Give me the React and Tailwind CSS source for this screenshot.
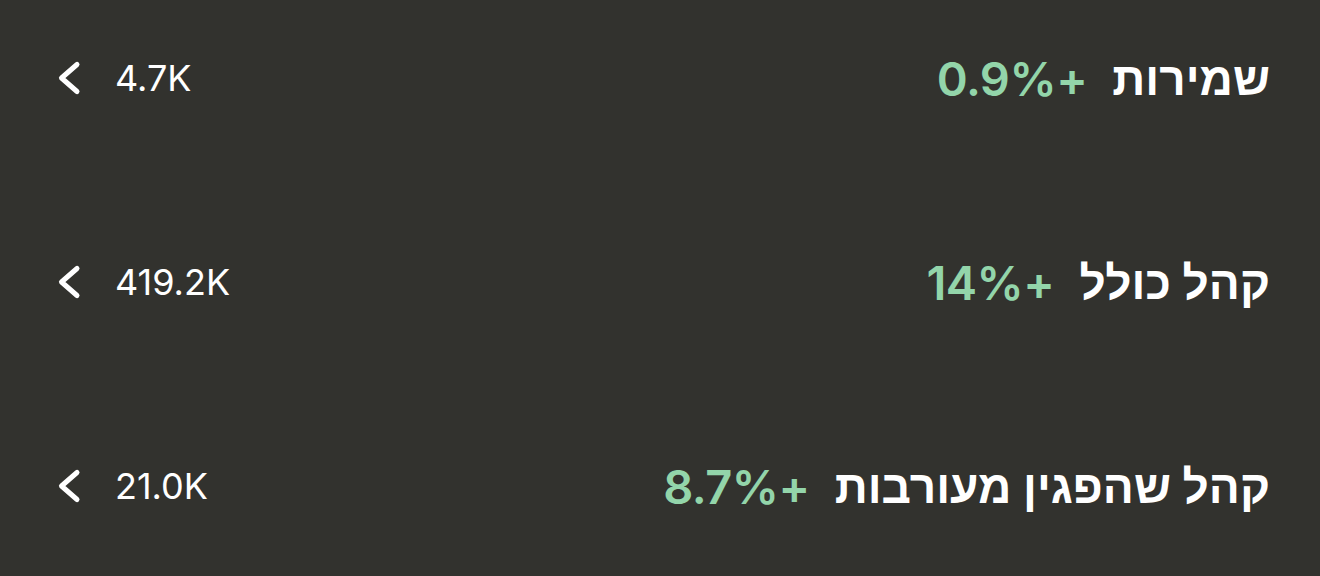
import React from "react";

const rows = [
  { label: "שמירות", change: "0.9%+", value: "4.7K" },
  { label: "קהל כולל", change: "14%+", value: "419.2K" },
  { label: "קהל שהפגין מעורבות", change: "8.7%+", value: "21.0K" },
];

function ChevronLeft() {
  return (
    <svg width="32" height="36" viewBox="0 0 32 36" fill="none" className="shrink-0">
      <path
        d="M25 4.5 L9.5 18 L25 31.5"
        stroke="white"
        strokeWidth="5"
        strokeLinecap="round"
        strokeLinejoin="round"
      />
    </svg>
  );
}

export default function App() {
  return (
    <div
      className="w-[1320px] h-[576px] bg-[#32322e] overflow-hidden flex flex-col gap-[160px] pt-[56px] pl-[52px] pr-[50px]"
      style={{ fontFamily: 'Inter, "Liberation Sans", sans-serif' }}
    >
      {rows.map((r) => (
        <div key={r.label} dir="rtl" className="h-[44px] flex items-center justify-between">
          <div className="flex items-center gap-[25px]">
            <span className="text-white text-[46px] font-semibold leading-none">{r.label}</span>
            <span dir="ltr" className="text-[#93d5aa] text-[47px] font-semibold leading-none tracking-[-0.5px]">
              {r.change}
            </span>
          </div>
          <div dir="ltr" className="flex items-center gap-[31px]">
            <ChevronLeft />
            <span className="text-white text-[36px] font-normal leading-none">{r.value}</span>
          </div>
        </div>
      ))}
    </div>
  );
}
